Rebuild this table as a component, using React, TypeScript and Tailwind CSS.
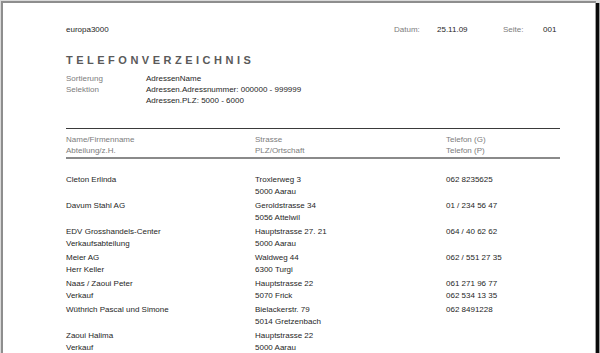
import React from "react";

type Entry = {
  name: string;
  dept?: string;
  street: string;
  city: string;
  phoneG?: string;
  phoneP?: string;
};

const entries: Entry[] = [
  { name: "Cleton Erlinda", street: "Troxlerweg 3", city: "5000 Aarau", phoneG: "062 8235625" },
  { name: "Davum Stahl AG", street: "Geroldstrasse 34", city: "5056 Attelwil", phoneG: "01 / 234 56 47" },
  { name: "EDV Grosshandels-Center", dept: "Verkaufsabteilung", street: "Hauptstrasse 27. 21", city: "5000 Aarau", phoneG: "064 / 40 62 62" },
  { name: "Meier AG", dept: "Herr Keller", street: "Waldweg 44", city: "6300 Turgi", phoneG: "062 / 551 27 35" },
  { name: "Naas / Zaoui Peter", dept: "Verkauf", street: "Hauptstrasse 22", city: "5070 Frick", phoneG: "061 271 96 77", phoneP: "062 534 13 35" },
  { name: "Wüthrich Pascal und Simone", street: "Bielackerstr. 79", city: "5014 Gretzenbach", phoneG: "062 8491228" },
  { name: "Zaoui Halima", dept: "Verkauf", street: "Hauptstrasse 22", city: "5000 Aarau" },
];

function Cell({ top, bottom, className }: { top?: string; bottom?: string; className: string }) {
  return (
    <div className={className}>
      <div className="h-[11.5px]">{top ?? ""}</div>
      <div className="h-[11.5px]">{bottom ?? ""}</div>
    </div>
  );
}

export default function App() {
  return (
    <div
      className="w-[600px] h-[353px] overflow-hidden bg-[#dadada] flex pt-[1px] pl-[1px]"
      style={{ fontFamily: '"Liberation Sans", Arial, sans-serif' }}
    >
      {/* report page */}
      <div className="w-[595px] h-[360px] shrink-0 bg-white border-l-2 border-t-2 border-r border-[#8e8e8e] border-r-[#a0a0a0] pl-[63px] pt-[21px] text-[8px] leading-[11px] text-[#262626]">
        <div className="w-[494px]">
          {/* page header */}
          <div className="flex h-[11px] items-center">
            <div className="w-[328px]">europa3000</div>
            <div className="w-[43px] text-[#7c7c7c]">Datum:</div>
            <div className="w-[66px]">25.11.09</div>
            <div className="w-[40px] text-[#7c7c7c]">Seite:</div>
            <div>001</div>
          </div>

          <div className="mt-[18px] h-[14px] text-[11px] leading-[14px] font-bold tracking-[3.5px] text-[#5a5a5a]">
            TELEFONVERZEICHNIS
          </div>

          <div className="mt-[6px] flex">
            <div className="w-[80px] text-[#7c7c7c]">
              <div>Sortierung</div>
              <div>Selektion</div>
            </div>
            <div>
              <div>AdressenName</div>
              <div>Adressen.Adressnummer: 000000 - 999999</div>
              <div>Adressen.PLZ: 5000 - 6000</div>
            </div>
          </div>

          {/* column headings */}
          <div className="mt-[22px] border-t border-[#3a3a3a] border-b-2 border-b-[#8a8a8a] pt-[5px] pb-[1px] flex text-[#7c7c7c]">
            <div className="w-[189px]">
              <div>Name/Firmenname</div>
              <div>Abteilung/z.H.</div>
            </div>
            <div className="w-[191px]">
              <div>Strasse</div>
              <div>PLZ/Ortschaft</div>
            </div>
            <div>
              <div>Telefon (G)</div>
              <div>Telefon (P)</div>
            </div>
          </div>

          {/* address list */}
          <div className="mt-[15px] flex flex-col leading-[11.5px]">
            {entries.map((e) => (
              <div key={e.name} className="flex h-[26px]">
                <Cell className="w-[189px]" top={e.name} bottom={e.dept} />
                <Cell className="w-[191px]" top={e.street} bottom={e.city} />
                <Cell className="flex-1" top={e.phoneG} bottom={e.phoneP} />
              </div>
            ))}
          </div>
        </div>
      </div>
      {/* window edge */}
      <div className="w-[3px] mt-[2px] h-[360px] shrink-0 bg-[#0a0a0a]" />
      <div className="w-[1px] mt-[2px] h-[360px] shrink-0 bg-[#9a9a9a]" />
    </div>
  );
}
